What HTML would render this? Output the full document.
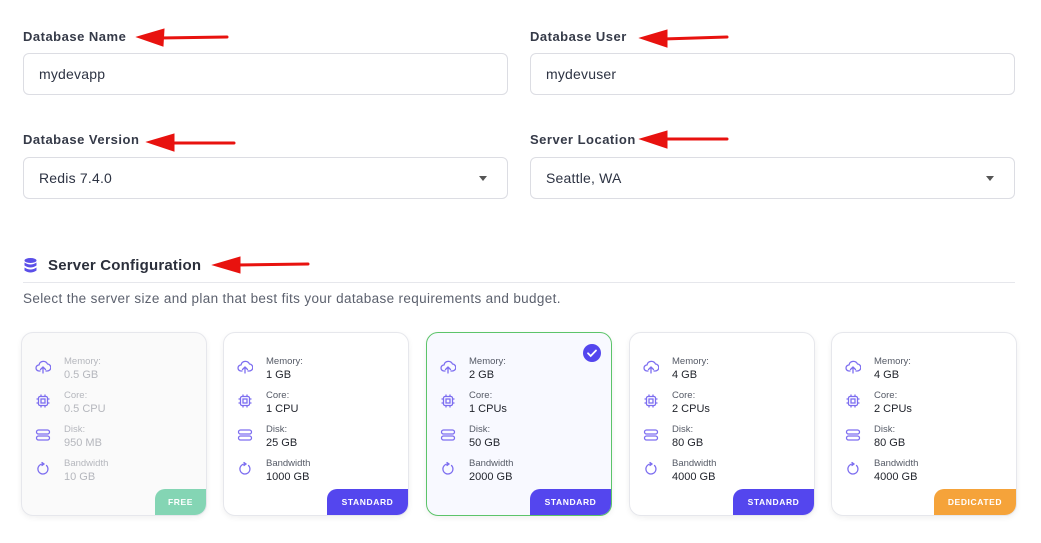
<!DOCTYPE html>
<html><head><style>
*{box-sizing:border-box;margin:0;padding:0}
body{width:1041px;height:543px;background:#fff;font-family:"Liberation Sans",sans-serif;color:#2d3343;position:relative;overflow:hidden}
.lbl{position:absolute;font-size:13px;font-weight:bold;color:#353a48;letter-spacing:0.5px}
.inp{position:absolute;height:42px;border:1px solid #dcdde3;border-radius:6px;font-size:14px;padding-left:15px;line-height:40px;color:#2d3343;letter-spacing:0.2px}
.caret{position:absolute;right:20px;top:18px;width:0;height:0;border-left:4px solid transparent;border-right:4px solid transparent;border-top:5px solid #555}
.card{position:absolute;top:332px;width:186px;height:184px;border:1px solid #e6e7ec;border-radius:12px;background:#fff;box-shadow:0 2px 6px rgba(0,0,0,.06);overflow:hidden}
.card.dis{background:#fafafa}
.card.sel{border-color:#5cc46a;background:#f8f9ff}
.row{position:absolute;left:42px;font-size:9.5px;color:#555a66;line-height:12px}
.row b{display:block;font-weight:normal;font-size:11px;color:#22252d;margin-top:1px}
.dis .row,.dis .row b{color:#b5b7bd}
.ic{position:absolute;left:13px;width:16px;height:16px}
.badge{position:absolute;right:0;bottom:0;height:26px;border-top-left-radius:10px;color:#fff;font-size:8.5px;font-weight:bold;letter-spacing:.6px;line-height:26px;text-align:center}
</style></head><body>
<div class="lbl" style="left:23px;top:29px">Database Name</div>
<div class="inp" style="left:23px;top:53px;width:485px">mydevapp</div>
<div class="lbl" style="left:530px;top:29px">Database User</div>
<div class="inp" style="left:530px;top:53px;width:485px">mydevuser</div>
<div class="lbl" style="left:23px;top:132px">Database Version</div>
<div class="inp" style="left:23px;top:157px;width:485px">Redis 7.4.0<span class="caret"></span></div>
<div class="lbl" style="left:530px;top:132px">Server Location</div>
<div class="inp" style="left:530px;top:157px;width:485px">Seattle, WA<span class="caret"></span></div>

<svg style="position:absolute;left:24px;top:258px" width="13" height="15" viewBox="0 0 13 15"><g fill="#5b4fe8"><ellipse cx="6.5" cy="2.5" rx="6" ry="2.5"/><path d="M0.5 4.5q6 4 12 0v3q-6 4-12 0z"/><path d="M0.5 9.5q6 4 12 0v3q-6 4-12 0z"/></g></svg>
<div style="position:absolute;left:48px;top:257px;font-size:15px;font-weight:bold;color:#2b2f3b;letter-spacing:0.2px">Server Configuration</div>
<div style="position:absolute;left:23px;top:282px;width:992px;height:1px;background:#e6e7ec"></div>
<div style="position:absolute;left:23px;top:291px;font-size:13.5px;letter-spacing:0.35px;color:#5c616e">Select the server size and plan that best fits your database requirements and budget.</div>

<svg width="0" height="0" style="position:absolute"><defs>
<g id="cl" fill="none" stroke="#7d6ef0" stroke-width="1.3" stroke-linecap="round" stroke-linejoin="round"><path d="M5 12H4a3 3 0 0 1 0-6 4.5 4.5 0 0 1 8.5-1A3 3 0 0 1 12 12h-1"/><path d="M8 14V8M5.5 10.5L8 8l2.5 2.5"/></g>
<g id="cp" fill="none" stroke="#7d6ef0" stroke-width="1.3"><rect x="3.5" y="3.5" width="9" height="9" rx="1.5"/><rect x="6" y="6" width="4" height="4"/><path d="M6 1.5v2M10 1.5v2M6 12.5v2M10 12.5v2M1.5 6h2M1.5 10h2M12.5 6h2M12.5 10h2"/></g>
<g id="dk" fill="none" stroke="#7d6ef0" stroke-width="1.3"><rect x="1.5" y="3" width="13" height="4" rx="2"/><rect x="1.5" y="9" width="13" height="4" rx="2"/></g>
<g id="rf" fill="none" stroke="#7d6ef0" stroke-width="1.3" stroke-linecap="round"><path d="M11.5 4.5A5 5 0 1 1 8 3"/><path d="M7 1.5L9 3 7 4.5"/></g>
</defs></svg>

<div class="card dis" style="left:21px">
<svg class="ic" style="top:26px"><use href="#cl"/></svg><div class="row" style="top:23px">Memory:<b>0.5 GB</b></div>
<svg class="ic" style="top:60px"><use href="#cp"/></svg><div class="row" style="top:57px">Core:<b>0.5 CPU</b></div>
<svg class="ic" style="top:94px"><use href="#dk"/></svg><div class="row" style="top:91px">Disk:<b>950 MB</b></div>
<svg class="ic" style="top:128px"><use href="#rf"/></svg><div class="row" style="top:125px">Bandwidth<b>10 GB</b></div>
<div class="badge" style="width:51px;background:#84d5b4">FREE</div></div>

<div class="card" style="left:223px">
<svg class="ic" style="top:26px"><use href="#cl"/></svg><div class="row" style="top:23px">Memory:<b>1 GB</b></div>
<svg class="ic" style="top:60px"><use href="#cp"/></svg><div class="row" style="top:57px">Core:<b>1 CPU</b></div>
<svg class="ic" style="top:94px"><use href="#dk"/></svg><div class="row" style="top:91px">Disk:<b>25 GB</b></div>
<svg class="ic" style="top:128px"><use href="#rf"/></svg><div class="row" style="top:125px">Bandwidth<b>1000 GB</b></div>
<div class="badge" style="width:81px;background:#5446ee">STANDARD</div></div>

<div class="card sel" style="left:426px">
<svg style="position:absolute;right:10px;top:11px" width="18" height="18"><circle cx="9" cy="9" r="9" fill="#5446ee"/><path d="M5 9.3l2.7 2.7L13 6.5" fill="none" stroke="#fff" stroke-width="1.8" stroke-linecap="round"/></svg>
<svg class="ic" style="top:26px"><use href="#cl"/></svg><div class="row" style="top:23px">Memory:<b>2 GB</b></div>
<svg class="ic" style="top:60px"><use href="#cp"/></svg><div class="row" style="top:57px">Core:<b>1 CPUs</b></div>
<svg class="ic" style="top:94px"><use href="#dk"/></svg><div class="row" style="top:91px">Disk:<b>50 GB</b></div>
<svg class="ic" style="top:128px"><use href="#rf"/></svg><div class="row" style="top:125px">Bandwidth<b>2000 GB</b></div>
<div class="badge" style="width:81px;background:#5446ee">STANDARD</div></div>

<div class="card" style="left:629px">
<svg class="ic" style="top:26px"><use href="#cl"/></svg><div class="row" style="top:23px">Memory:<b>4 GB</b></div>
<svg class="ic" style="top:60px"><use href="#cp"/></svg><div class="row" style="top:57px">Core:<b>2 CPUs</b></div>
<svg class="ic" style="top:94px"><use href="#dk"/></svg><div class="row" style="top:91px">Disk:<b>80 GB</b></div>
<svg class="ic" style="top:128px"><use href="#rf"/></svg><div class="row" style="top:125px">Bandwidth<b>4000 GB</b></div>
<div class="badge" style="width:81px;background:#5446ee">STANDARD</div></div>

<div class="card" style="left:831px">
<svg class="ic" style="top:26px"><use href="#cl"/></svg><div class="row" style="top:23px">Memory:<b>4 GB</b></div>
<svg class="ic" style="top:60px"><use href="#cp"/></svg><div class="row" style="top:57px">Core:<b>2 CPUs</b></div>
<svg class="ic" style="top:94px"><use href="#dk"/></svg><div class="row" style="top:91px">Disk:<b>80 GB</b></div>
<svg class="ic" style="top:128px"><use href="#rf"/></svg><div class="row" style="top:125px">Bandwidth<b>4000 GB</b></div>
<div class="badge" style="width:82px;background:#f5a33a">DEDICATED</div></div>

<svg style="position:absolute;left:0;top:0" width="1041" height="543">
<g fill="#e8120f" stroke="#e8120f" stroke-width="3" stroke-linecap="round">
<line x1="160" y1="38" x2="227" y2="37"/><path d="M137 37L164 29L163 46Z" stroke-width="1"/>
<line x1="663" y1="39" x2="727" y2="37"/><path d="M640 38L667 30L667 47Z" stroke-width="1"/>
<line x1="171" y1="143" x2="234" y2="143"/><path d="M147 142L174 134L174 151Z" stroke-width="1"/>
<line x1="663" y1="139" x2="727" y2="139"/><path d="M640 139L667 131L667 148Z" stroke-width="1"/>
<line x1="237" y1="265" x2="308" y2="264"/><path d="M213 265L240 257L240 273Z" stroke-width="1"/>
</g></svg>
</body></html>
